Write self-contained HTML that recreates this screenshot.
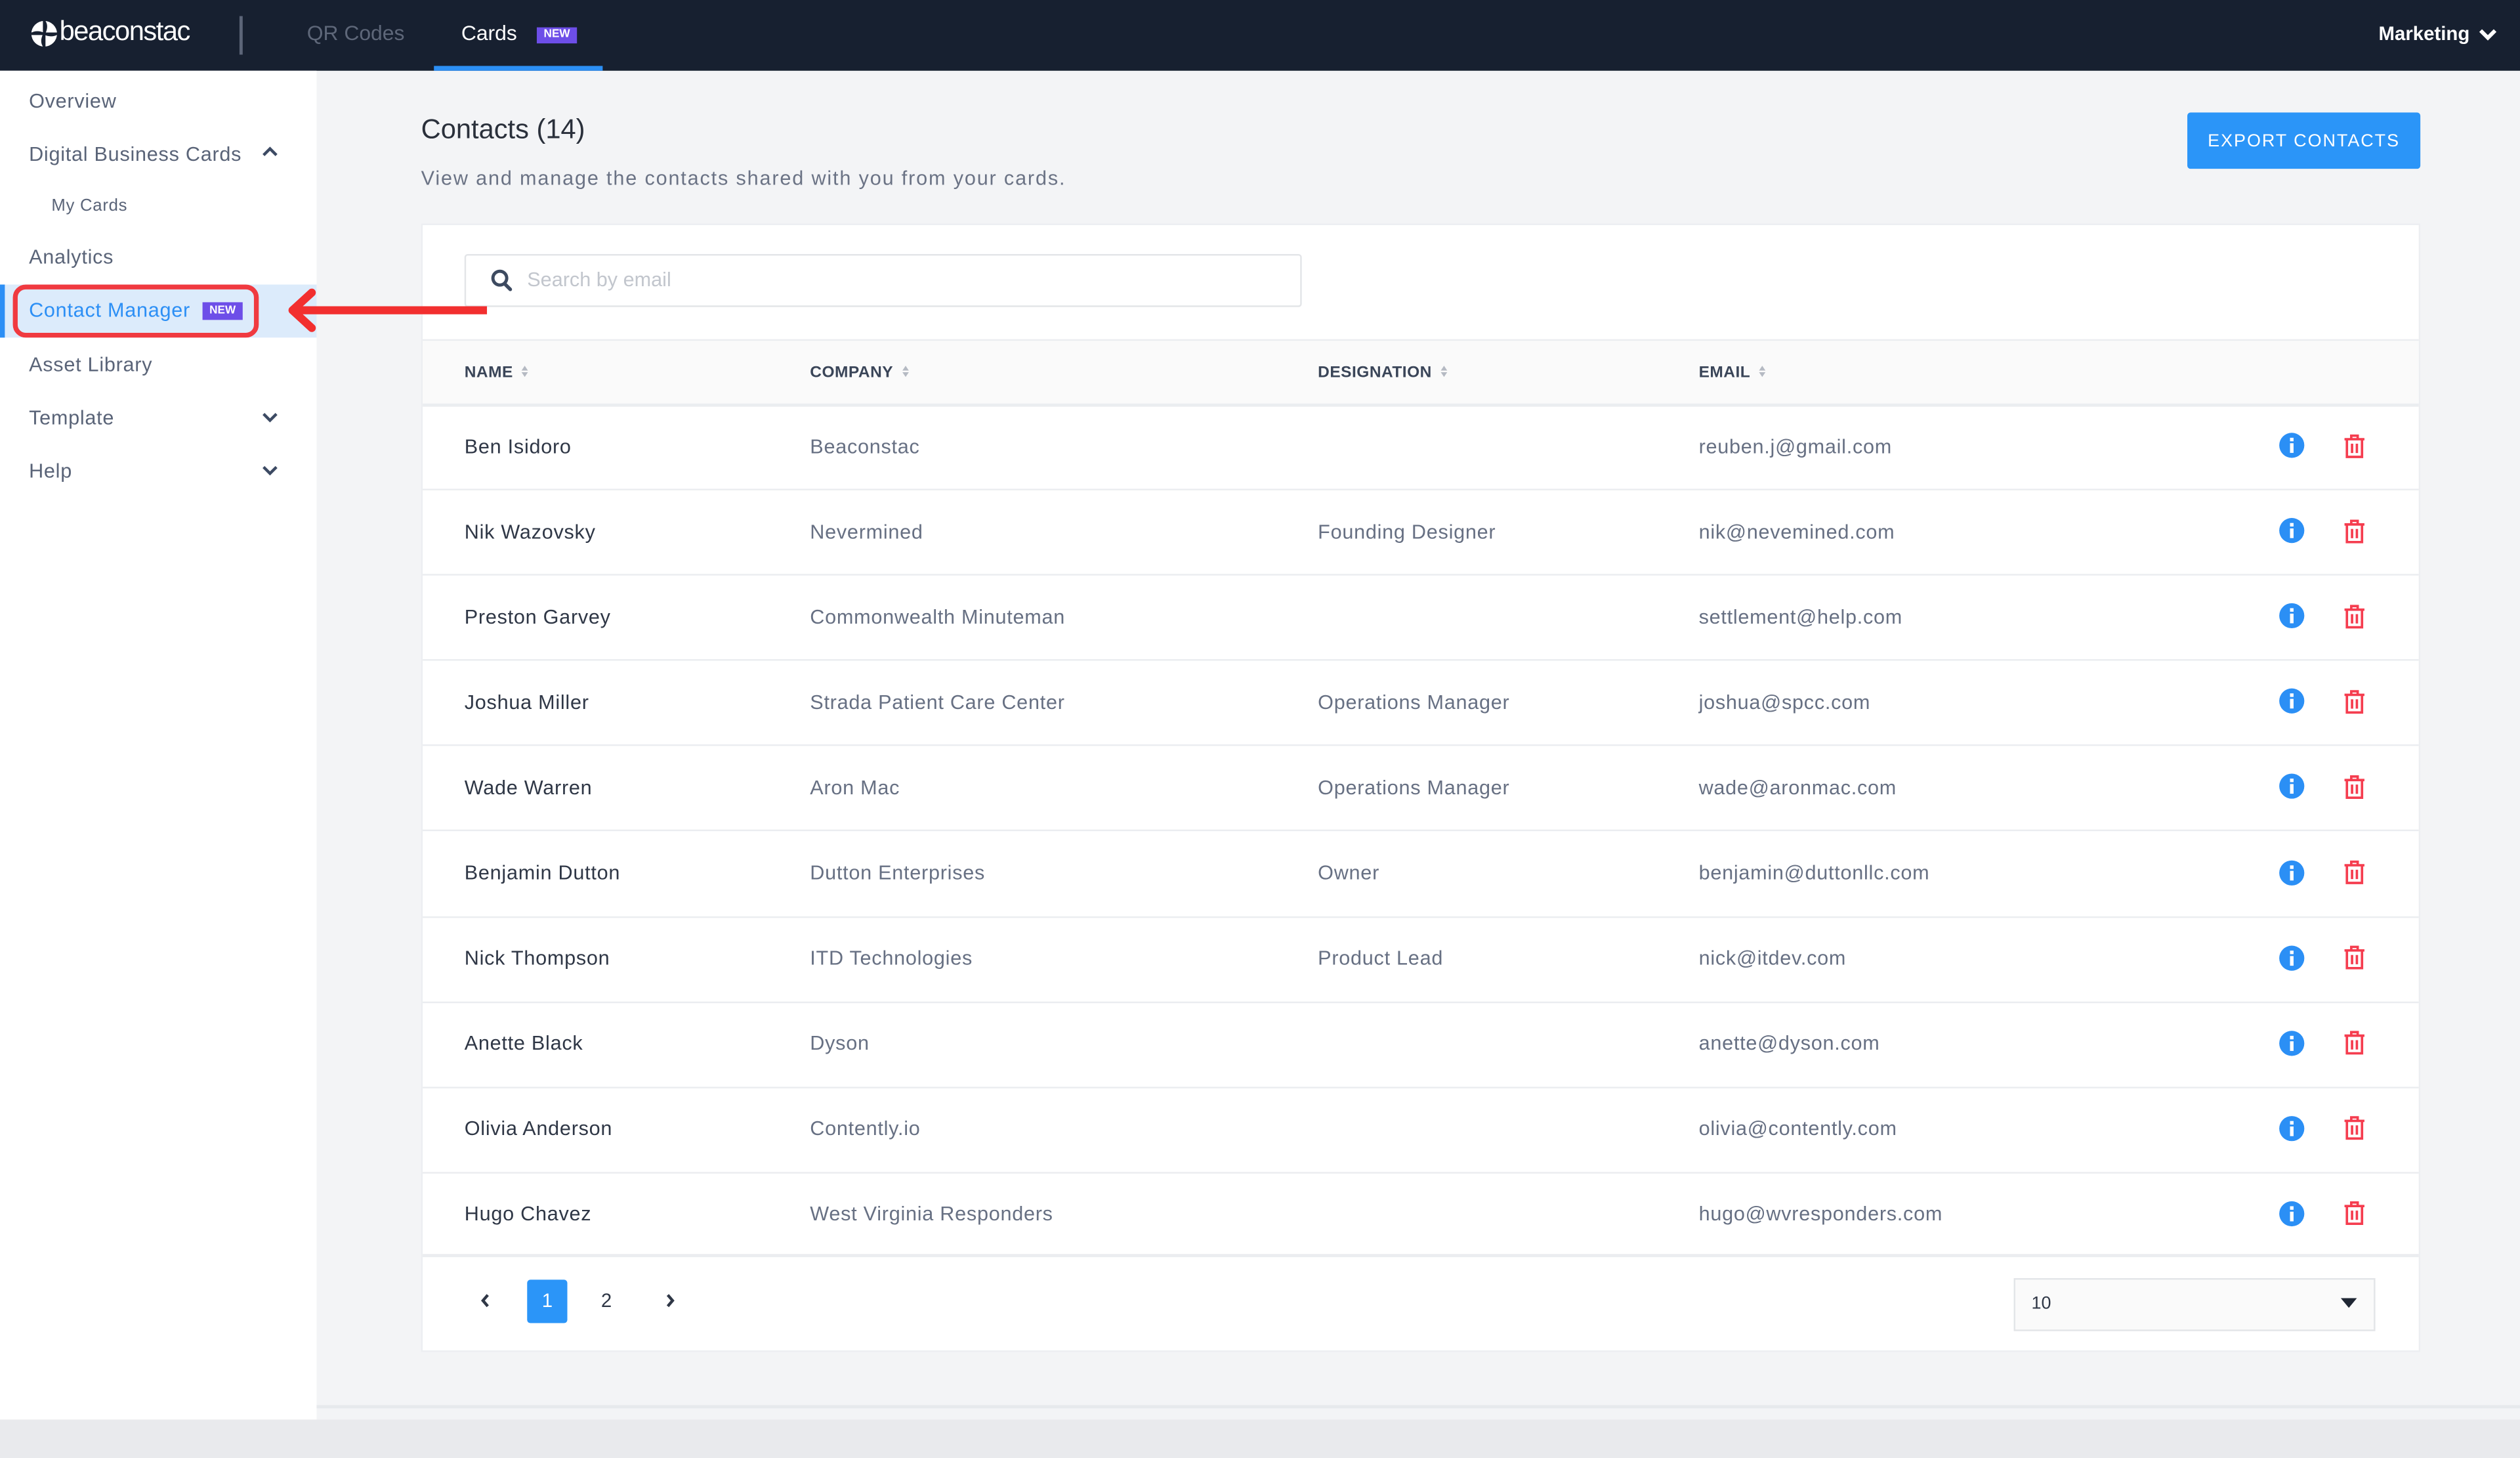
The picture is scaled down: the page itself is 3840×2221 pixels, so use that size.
<!DOCTYPE html>
<html><head><meta charset="utf-8">
<style>
html,body{margin:0;padding:0;width:3840px;height:2220px;overflow:hidden;background:#f3f4f6;}
#w{position:absolute;left:0;top:0;width:1568px;height:907px;transform:scale(2.44898);transform-origin:0 0;font-family:"Liberation Sans",sans-serif;background:#f3f4f6;}
.a{position:absolute;white-space:nowrap;}
.top{left:0;top:0;width:1568px;height:44px;background:#172030;}
.side{left:0;top:44px;width:197px;height:839px;background:#fff;}
.si{font-size:12.5px;color:#5a6478;letter-spacing:.3px;transform:translateY(-50%);}
.card{left:262px;top:139px;width:1244px;height:702px;background:#fff;border:1px solid #eceef1;box-sizing:border-box;}
.th{font-size:10px;font-weight:bold;color:#3a4558;letter-spacing:.2px;transform:translateY(-50%);}
.td{font-size:12.5px;color:#677083;letter-spacing:.3px;transform:translateY(-50%);}
.tn{color:#2f3746;}
.hl{left:263px;width:1242px;height:1px;background:#ebedf0;}
.sort{display:inline-block;width:5px;height:9px;margin-left:5px;vertical-align:-1px;}
</style></head><body><div id="w">

<div class="a top"></div>
<svg class="a" style="left:19px;top:12px" width="17" height="18" viewBox="0 0 17 18">
<circle cx="8.5" cy="9" r="8" fill="#fff"/>
<path d="M8.5 9 L8.5 1 M8.5 9 L16.5 9 M8.5 9 L8.5 17 M8.5 9 L0.5 9" stroke="#172030" stroke-width="1.6"/>
<path d="M8.5 9 Q11 4 8.5 1 M8.5 9 Q13 11 16.5 9 M8.5 9 Q6 14 8.5 17 M8.5 9 Q4 7 0.5 9" stroke="#172030" stroke-width="1.2" fill="none"/>
</svg>
<div class="a" style="left:37px;top:10px;font-size:17px;color:#fff;letter-spacing:-.6px;font-family:'Liberation Sans Narrow','Liberation Sans',sans-serif;">beaconstac</div>
<div class="a" style="left:149px;top:10px;width:2px;height:24px;background:#5c6578"></div>
<div class="a" style="left:191px;top:13px;font-size:13px;color:#5e6779;">QR Codes</div>
<div class="a" style="left:287px;top:13px;font-size:13px;color:#fff;">Cards</div>
<div class="a" style="left:334px;top:17px;width:25px;height:10px;background:#6d4ee8;color:#fff;font-size:7px;font-weight:bold;text-align:center;line-height:10px;">NEW</div>
<div class="a" style="left:270px;top:41px;width:105px;height:3px;background:#2c8ff5"></div>
<div class="a" style="left:1480px;top:14px;font-size:12px;font-weight:bold;color:#fff;">Marketing</div>
<svg class="a" style="left:1542px;top:17px" width="12" height="9" viewBox="0 0 12 9"><path d="M1.5 2 L6 6.5 L10.5 2" stroke="#fff" stroke-width="2.4" fill="none"/></svg>

<div class="a side"></div>
<div class="a si" style="left:18px;top:63px">Overview</div>
<div class="a si" style="left:18px;top:96px">Digital Business Cards</div>
<svg class="a" style="left:162px;top:90px" width="12" height="9" viewBox="0 0 12 9"><path d="M2 6.5 L6 2.5 L10 6.5" stroke="#3c4a63" stroke-width="1.8" fill="none"/></svg>
<div class="a si" style="left:32px;top:128px;font-size:10.5px;">My Cards</div>
<div class="a si" style="left:18px;top:160px">Analytics</div>
<div class="a" style="left:0;top:177px;width:197px;height:33px;background:#dcebfb"></div>
<div class="a" style="left:0;top:177px;width:3px;height:33px;background:#2c8ff5"></div>
<div class="a si" style="left:18px;top:193px;color:#2c8ff5">Contact Manager</div>
<div class="a" style="left:126px;top:188px;width:25px;height:11px;background:#6d4ee8;color:#fff;font-size:7px;font-weight:bold;text-align:center;line-height:11px;">NEW</div>
<div class="a" style="left:8px;top:177px;width:153px;height:33px;border:3px solid #f03a40;border-radius:8px;box-sizing:border-box;"></div>
<div class="a si" style="left:18px;top:227px">Asset Library</div>
<div class="a si" style="left:18px;top:260px">Template</div>
<svg class="a" style="left:162px;top:255px" width="12" height="9" viewBox="0 0 12 9"><path d="M2 2.5 L6 6.5 L10 2.5" stroke="#3c4a63" stroke-width="1.8" fill="none"/></svg>
<div class="a si" style="left:18px;top:293px">Help</div>
<svg class="a" style="left:162px;top:288px" width="12" height="9" viewBox="0 0 12 9"><path d="M2 2.5 L6 6.5 L10 2.5" stroke="#3c4a63" stroke-width="1.8" fill="none"/></svg>

<div class="a" style="left:262px;top:71px;font-size:17px;color:#2a303b;">Contacts (14)</div>
<div class="a" style="left:262px;top:104px;font-size:12.5px;color:#6b7385;letter-spacing:.75px;">View and manage the contacts shared with you from your cards.</div>
<div class="a" style="left:1361px;top:70px;width:145px;height:35px;background:#2b95f8;border-radius:2px;color:#fff;font-size:11px;letter-spacing:.8px;text-align:center;line-height:36px;">EXPORT CONTACTS</div>

<div class="a card"></div>
<div class="a" style="left:289px;top:158px;width:521px;height:33px;border:1px solid #e3e5e8;border-radius:2px;box-sizing:border-box;background:#fff"></div>
<svg class="a" style="left:305px;top:167px" width="14" height="15" viewBox="0 0 14 15"><circle cx="6" cy="6" r="4.3" stroke="#3d4a60" stroke-width="2" fill="none"/><path d="M9 9.5 L12.5 13" stroke="#3d4a60" stroke-width="2.2" stroke-linecap="round"/></svg>
<div class="a" style="left:328px;top:167px;font-size:12.5px;color:#c2c6cd;">Search by email</div>

<svg class="a" style="left:176px;top:178px;z-index:5" width="130" height="30" viewBox="0 0 130 30">
<path d="M127 15 L8 15" stroke="#f22f2f" stroke-width="5"/>
<path d="M18 4 L6 15 L18 26" stroke="#f22f2f" stroke-width="5" fill="none" stroke-linecap="round" stroke-linejoin="round"/>
</svg>

<div class="a" style="left:263px;top:212px;width:1242px;height:39px;background:#fafafa"></div>
<div class="a hl" style="top:211px"></div>
<div class="a hl" style="top:251px;height:2px"></div>
<svg width="0" height="0" style="position:absolute"><defs><g id="srt"><path d="M0.5 4 L2.5 1 L4.5 4Z M0.5 5 L2.5 8 L4.5 5Z" fill="#b5bac3"/></g></defs></svg>
<div class="a th" style="left:289px;top:232px">NAME<svg class="sort" viewBox="0 0 5 9"><use href="#srt"/></svg></div>
<div class="a th" style="left:504px;top:232px">COMPANY<svg class="sort" viewBox="0 0 5 9"><use href="#srt"/></svg></div>
<div class="a th" style="left:820px;top:232px">DESIGNATION<svg class="sort" viewBox="0 0 5 9"><use href="#srt"/></svg></div>
<div class="a th" style="left:1057px;top:232px">EMAIL<svg class="sort" viewBox="0 0 5 9"><use href="#srt"/></svg></div>

<svg width="0" height="0" style="position:absolute"><defs>
<g id="inf"><circle cx="8" cy="8" r="7.8" fill="#2b8ff5"/><rect x="6.9" y="3.3" width="2.2" height="2.2" fill="#fff"/><rect x="6.9" y="6.7" width="2.2" height="6" fill="#fff"/></g>
<g id="trs" fill="none" stroke="#f53d4f" stroke-width="1.5"><path d="M0.8 3.2 H13.2"/><path d="M5 3 V1 H9 V3"/><path d="M2.3 3.5 V14.2 H11.7 V3.5"/><path d="M5.5 6 V11.8 M8.5 6 V11.8"/></g>
</defs></svg>

<div id="rows"></div>
<script>
var d=[["Ben Isidoro","Beaconstac","","reuben.j@gmail.com"],["Nik Wazovsky","Nevermined","Founding Designer","nik@nevemined.com"],["Preston Garvey","Commonwealth Minuteman","","settlement@help.com"],["Joshua Miller","Strada Patient Care Center","Operations Manager","joshua@spcc.com"],["Wade Warren","Aron Mac","Operations Manager","wade@aronmac.com"],["Benjamin Dutton","Dutton Enterprises","Owner","benjamin@duttonllc.com"],["Nick Thompson","ITD Technologies","Product Lead","nick@itdev.com"],["Anette Black","Dyson","","anette@dyson.com"],["Olivia Anderson","Contently.io","","olivia@contently.com"],["Hugo Chavez","West Virginia Responders","","hugo@wvresponders.com"]];
var h="";
for(var i=0;i<d.length;i++){
 var c=277.5+i*53.1;
 h+='<div class="a td tn" style="left:289px;top:'+c+'px">'+d[i][0]+'</div>';
 h+='<div class="a td" style="left:504px;top:'+c+'px">'+d[i][1]+'</div>';
 h+='<div class="a td" style="left:820px;top:'+c+'px">'+d[i][2]+'</div>';
 h+='<div class="a td" style="left:1057px;top:'+c+'px">'+d[i][3]+'</div>';
 h+='<svg class="a" style="left:1418px;top:'+(c-8.5)+'px" width="16" height="16" viewBox="0 0 16 16"><use href="#inf"/></svg>';
 h+='<svg class="a" style="left:1458px;top:'+(c-8)+'px" width="14" height="15" viewBox="0 0 14 15"><use href="#trs"/></svg>';
 if(i<9) h+='<div class="a hl" style="top:'+(c+26.5)+'px"></div>';
}
document.getElementById("rows").innerHTML=h;
</script>
<div class="a hl" style="top:780px;height:2px"></div>

<svg class="a" style="left:298px;top:804px" width="8" height="10" viewBox="0 0 8 10"><path d="M5.5 1.5 L2.5 5 L5.5 8.5" stroke="#2f3746" stroke-width="1.8" fill="none"/></svg>
<div class="a" style="left:328px;top:796px;width:25px;height:27px;background:#2b95f8;border-radius:2px;color:#fff;font-size:12px;text-align:center;line-height:27px;">1</div>
<div class="a" style="left:374px;top:802px;font-size:12px;color:#2f3746;">2</div>
<svg class="a" style="left:413px;top:804px" width="8" height="10" viewBox="0 0 8 10"><path d="M2.5 1.5 L5.5 5 L2.5 8.5" stroke="#2f3746" stroke-width="1.8" fill="none"/></svg>
<div class="a" style="left:1253px;top:795px;width:225px;height:33px;border:1px solid #e3e5e8;background:#fafafa;box-sizing:border-box;"></div>
<div class="a" style="left:1264px;top:805px;font-size:11px;color:#2f3746;">10</div>
<svg class="a" style="left:1456px;top:807px" width="11" height="7" viewBox="0 0 11 7"><path d="M0.5 0.5 H10.5 L5.5 6.5Z" fill="#1f2633"/></svg>

<div class="a" style="left:197px;top:874px;width:1371px;height:2px;background:#e6e9ec"></div>
<div class="a" style="left:0;top:883px;width:1568px;height:24px;background:#e9eaed"></div>
</div></body></html>
